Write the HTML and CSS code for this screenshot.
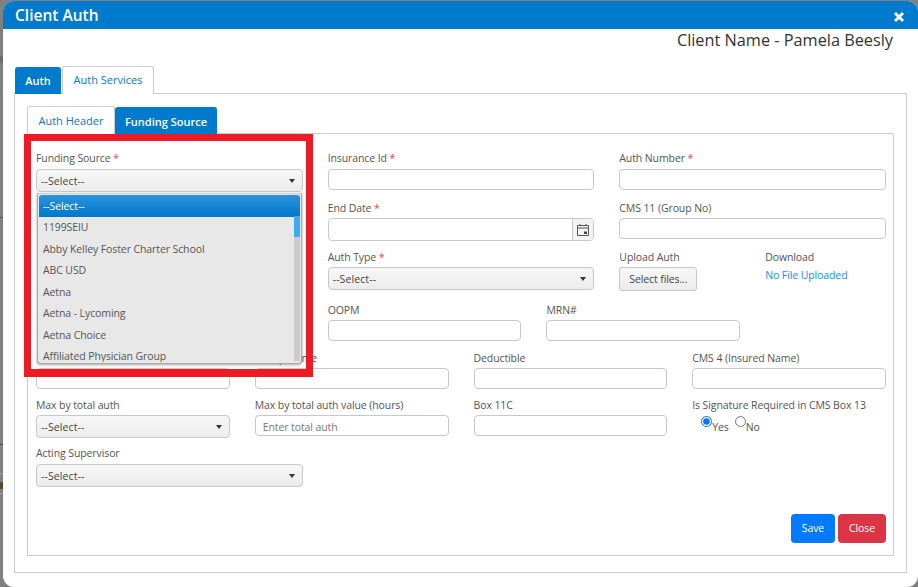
FILE: index.html
```html
<!DOCTYPE html>
<html lang="en">
<head>
<meta charset="utf-8">
<title>Client Auth</title>
<link rel="stylesheet" href="styles.css">
</head>
<body>
<div class="modal">
  <header class="titlebar">
    <h1 class="title">Client Auth</h1>
    <svg class="close-x" width="12" height="12" viewBox="0 0 12 12"><path d="M2 2l8 8M10 2l-8 8" stroke="#fff" stroke-width="3" fill="none"/></svg>
  </header>
  <div class="modal-body">
    <div class="client-name">Client Name - Pamela Beesly</div>
    <nav class="tabs outer-tabs">
      <a class="tab tab-active">Auth</a>
      <a class="tab">Auth Services</a>
    </nav>
    <section class="outer-panel">
      <nav class="tabs inner-tabs">
        <a class="tab">Auth Header</a>
        <a class="tab tab-active">Funding Source</a>
      </nav>
      <div class="inner-panel">
        <div class="form">
          <div class="row cols-3 row-first">
            <div class="field field-anchor">
              <label class="label">Funding Source <span class="req">*</span></label>
              <div class="select select-open"><span>--Select--</span><i class="caret"></i></div>
              <div class="dropdown">
                <ul class="options">
                  <li class="option option-selected">--Select--</li>
                  <li class="option">1199SEIU</li>
                  <li class="option">Abby Kelley Foster Charter School</li>
                  <li class="option">ABC USD</li>
                  <li class="option">Aetna</li>
                  <li class="option">Aetna - Lycoming</li>
                  <li class="option">Aetna Choice</li>
                  <li class="option">Affiliated Physician Group</li>
                </ul>
                <div class="scrollbar"><div class="thumb"></div></div>
              </div>
            </div>
            <div class="field">
              <label class="label">Insurance Id <span class="req">*</span></label>
              <div class="input"></div>
            </div>
            <div class="field">
              <label class="label">Auth Number <span class="req">*</span></label>
              <div class="input"></div>
            </div>
          </div>
          <div class="row cols-3">
            <div class="field"></div>
            <div class="field">
              <label class="label">End Date <span class="req">*</span></label>
              <div class="input input-date">
                <span class="date-addon">
                  <svg width="12" height="12" viewBox="0 0 12 12"><path d="M.5 1.5h11v10H.5zM.5 4h11" fill="none" stroke="#555"/><path d="M3 0v2M9 0v2" stroke="#555"/><path d="M7 7.5h3v2.5H7z" fill="#444"/></svg>
                </span>
              </div>
            </div>
            <div class="field">
              <label class="label">CMS 11 (Group No)</label>
              <div class="input"></div>
            </div>
          </div>
          <div class="row cols-3">
            <div class="field"></div>
            <div class="field">
              <label class="label">Auth Type <span class="req">*</span></label>
              <div class="select"><span>--Select--</span><i class="caret"></i></div>
            </div>
            <div class="split">
              <div class="field">
                <label class="label">Upload Auth</label>
                <button class="upload-btn" type="button">Select files...</button>
              </div>
              <div class="field">
                <label class="label">Download</label>
                <a class="file-link">No File Uploaded</a>
              </div>
            </div>
          </div>
          <div class="row cols-oopm">
            <div class="field"></div>
            <div class="field">
              <label class="label">OOPM</label>
              <div class="input"></div>
            </div>
            <div class="field">
              <label class="label">MRN#</label>
              <div class="input"></div>
            </div>
          </div>
          <div class="row cols-4">
            <div class="field">
              <label class="label">&nbsp;</label>
              <div class="input"></div>
            </div>
            <div class="field">
              <label class="label">Group Name</label>
              <div class="input"></div>
            </div>
            <div class="field">
              <label class="label">Deductible</label>
              <div class="input"></div>
            </div>
            <div class="field">
              <label class="label">CMS 4 (Insured Name)</label>
              <div class="input"></div>
            </div>
          </div>
          <div class="row cols-4">
            <div class="field">
              <label class="label">Max by total auth</label>
              <div class="select"><span>--Select--</span><i class="caret"></i></div>
            </div>
            <div class="field">
              <label class="label">Max by total auth value (hours)</label>
              <div class="input input-placeholder">Enter total auth</div>
            </div>
            <div class="field">
              <label class="label">Box 11C</label>
              <div class="input"></div>
            </div>
            <div class="field">
              <label class="label">Is Signature Required in CMS Box 13</label>
              <div class="radios">
                <label class="radio"><input type="radio" name="sig" checked><span>Yes</span></label>
                <label class="radio"><input type="radio" name="sig"><span>No</span></label>
              </div>
            </div>
          </div>
          <div class="row cols-3 row-first">
            <div class="field">
              <label class="label">Acting Supervisor</label>
              <div class="select"><span>--Select--</span><i class="caret"></i></div>
            </div>
          </div>
        </div>
        <div class="actions">
          <button class="btn btn-save" type="button">Save</button>
          <button class="btn btn-close" type="button">Close</button>
        </div>
      </div>
      <div class="highlight"></div>
    </section>
  </div>
</div>
</body>
</html>
```

FILE: styles.css
```css
* { box-sizing: border-box; }
html, body { margin: 0; height: 587px; overflow: hidden; }
body {
  padding: 1px 0 0 3px;
  font-family: "Open Sans", "Noto Sans", sans-serif;
  font-size: 10.5px;
  letter-spacing: -.1px;
  color: #555;
  background:
    linear-gradient(to bottom,
      #808080 0 56px, #6e6e6e 56px 63px, #808080 63px 217px, #5b3f8a 217px 218px,
      #808080 218px 444px, #5b3f8a 444px 445px, #808080 445px 473px, #a0a0a0 473px 474px,
      #808080 474px 482px, #5a4a30 482px 489px, #808080 489px 493px, #a0a0a0 493px 494px,
      #808080 494px);
}
.modal {
  width: 915px;
  height: 586px;
  background: #fff;
  border-radius: 11px;
  overflow: hidden;
  display: flex;
  flex-direction: column;
}
.titlebar {
  flex: none;
  height: 28px;
  background: #007acc;
  display: flex;
  align-items: center;
  justify-content: space-between;
  padding: 0 13px 0 12px;
}
.title { margin: 0; font-size: 15.5px; font-weight: 600; letter-spacing: 0; color: #fff; line-height: 24px; }
.close-x { margin-top: 4px; }
.modal-body { flex: 1; padding: 0 11px; display: flex; flex-direction: column; }
.client-name {
  height: 36px;
  padding: 0 14px 0 0;
  text-align: right;
  font-size: 16.3px;
  line-height: 23px;
  letter-spacing: 0;
  color: #333;
}
.tabs { display: flex; align-items: flex-end; position: relative; z-index: 1; }
.tab {
  display: block;
  background: #fff;
  border: 1px solid #ccc;
  border-bottom: none;
  border-radius: 3px 3px 0 0;
  color: #0a78c8;
  font-size: 11px;
  letter-spacing: 0;
  text-align: center;
}
.tab-active { background: #007acc; color: #fff; border-color: #007acc; }
.outer-tabs { height: 29px; padding-left: 1px; margin-bottom: -1px; }
.outer-tabs .tab { height: 28px; line-height: 25px; width: 92px; margin-left: 1px; }
.outer-tabs .tab-active { height: 27px; line-height: 25px; width: 46px; margin-left: 0; font-weight: 600; }
.outer-panel {
  flex: none;
  height: 480px;
  border: 1px solid #ccc;
  padding: 12px 12px 16px;
  display: flex;
  flex-direction: column;
  position: relative;
}
.inner-tabs { height: 28px; margin-bottom: -1px; }
.inner-tabs .tab { height: 28px; line-height: 28px; width: 88px; }
.inner-tabs .tab-active { height: 27px; line-height: 27px; width: 102px; font-weight: 600; }
.inner-panel {
  flex: 1;
  border: 1px solid #ccc;
  padding: 16px 7px 12px 8px;
  display: flex;
  flex-direction: column;
}
.form {
  display: grid;
  grid-template-rows: 50px 49px 53px 48px 47px 48px auto;
  flex: 1;
  align-content: start;
}
.row { display: grid; column-gap: 25px; align-items: start; }
.cols-3 { grid-template-columns: repeat(3, 1fr); }
.cols-4 { grid-template-columns: repeat(4, 1fr); }
.cols-oopm { grid-template-columns: 266.67px 193.75px 193.75px; }
.split { display: grid; grid-template-columns: 1fr 1fr; column-gap: 25px; }
.field-anchor { position: relative; }
.label { display: block; height: 16px; margin-bottom: 2px; line-height: 16px; white-space: nowrap; }
.row-first .label { margin-bottom: 3px; }
.req { color: #f44; }
.input {
  height: 21px;
  border: 1px solid #c8c8c8;
  border-radius: 4px;
  background: #fff;
}
.input-placeholder { padding-left: 7px; line-height: 22px; color: #777; }
.input-date { height: 23px; display: flex; justify-content: flex-end; }
.date-addon {
  width: 21px;
  border-left: 1px solid #c8c8c8;
  background: #f3f3f3;
  border-radius: 0 3px 3px 0;
  display: flex;
  align-items: center;
  justify-content: center;
}
.select {
  height: 23px;
  border: 1px solid #c8c8c8;
  border-radius: 4px;
  background: linear-gradient(#f7f7f7, #ececec);
  display: flex;
  align-items: center;
  justify-content: space-between;
  padding: 0 7px 0 4px;
  color: #444;
  letter-spacing: .1px;
}
.caret {
  width: 0;
  height: 0;
  border-left: 3px solid transparent;
  border-right: 3px solid transparent;
  border-top: 4px solid #333;
}
.upload-btn {
  display: block;
  width: 78px;
  height: 24px;
  padding: 0;
  border: 1px solid #c8c8c8;
  border-radius: 3px;
  background: linear-gradient(#f7f7f7, #ececec);
  font: inherit;
  letter-spacing: inherit;
  color: #444;
}
.file-link { display: block; color: #1a8cff; line-height: 16px; }
.radios { display: flex; gap: 6px; padding-left: 9px; }
.radio { display: flex; align-items: flex-start; }
.radio input { width: 11px; height: 11px; margin: 1px 0 0; }
.radio span { padding-top: 4px; line-height: 16px; }
.actions { display: flex; justify-content: flex-end; gap: 3px; }
.btn {
  height: 29px;
  padding: 0 0 2px;
  border: none;
  border-radius: 4px;
  color: #fff;
  font: inherit;
  letter-spacing: inherit;
}
.btn-save { width: 44px; background: #007bff; }
.btn-close { width: 48px; background: #dc3545; }
.dropdown {
  position: absolute;
  left: 1px;
  top: 43px;
  width: 265px;
  height: 171px;
  background: #e8e8e8;
  border: 1px solid #aaa;
  border-top-color: #ccc;
  border-radius: 0 0 4px 4px;
  box-shadow: 0 1px 3px rgba(0, 0, 0, .35);
  padding: 1px;
  overflow: hidden;
  z-index: 2;
}
.options { list-style: none; margin: 0; padding: 0; height: 100%; overflow: hidden; }
.option { height: 21.5px; line-height: 21.5px; padding-left: 4px; color: #555; white-space: nowrap; }
.option-selected {
  height: 22px;
  line-height: 22px;
  color: #fff;
  background: linear-gradient(#2b92dc, #0079cc);
  border-radius: 3px 3px 0 0;
}
.scrollbar { position: absolute; right: 1px; top: 22px; bottom: 2px; width: 6px; background: #ccc; }
.thumb { height: 21px; background: #3ea9f5; }
.highlight {
  position: absolute;
  left: 9px;
  top: 40px;
  width: 289px;
  height: 243px;
  border: 7px solid #ed1c24;
  border-bottom-width: 8px;
  pointer-events: none;
  z-index: 3;
}
```
